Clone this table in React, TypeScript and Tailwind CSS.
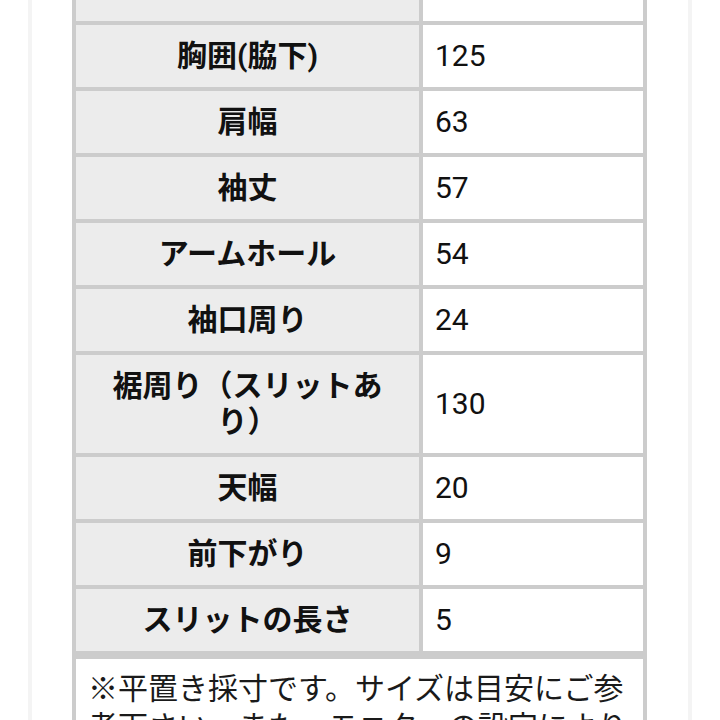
const rows: { label: string; value: string }[] = [
  { label: "胸囲(脇下)", value: "125" },
  { label: "肩幅", value: "63" },
  { label: "袖丈", value: "57" },
  { label: "アームホール", value: "54" },
  { label: "袖口周り", value: "24" },
  { label: "裾周り（スリットあり）", value: "130" },
  { label: "天幅", value: "20" },
  { label: "前下がり", value: "9" },
  { label: "スリットの長さ", value: "5" },
];

function SizeRow({ label, value }: { label: string; value: string }) {
  return (
    <div className="grid grid-cols-[343px_220px] gap-[4px]">
      <div className="flex min-h-[62px] items-center justify-center bg-[#ececec] px-[20px] py-[13px] text-center text-[30px] font-bold leading-[36px] text-[#111]">
        {label}
      </div>
      <div className="flex min-h-[62px] items-center bg-white px-[12px] py-[13px] text-[30px] leading-[36px] text-[#111]">
        {value}
      </div>
    </div>
  );
}

export default function App() {
  return (
    <div
      className="h-[720px] w-[720px] overflow-hidden bg-white"
      style={{ fontFamily: "Roboto, 'Noto Sans CJK JP', sans-serif" }}
    >
      <div className="ml-[28px] h-full w-[664px] border-x-4 border-[#f4f4f4] pl-[40px]">
        <div className="flex w-[575px] flex-col gap-[4px] bg-[#cccccc] px-[4px] pb-[4px]">
          <div className="grid grid-cols-[343px_220px] gap-[4px]">
            <div className="h-[21px] bg-[#ececec]" />
            <div className="h-[21px] bg-white" />
          </div>
          {rows.map((r) => (
            <SizeRow key={r.label} label={r.label} value={r.value} />
          ))}
        </div>
        <div className="w-[575px] border-4 border-[#cccccc] bg-white px-[12px] pt-[11px] pb-[20px] text-[30px] leading-[38px] text-[#1a1a1a]">
          ※平置き採寸です。サイズは目安にご参考下さい。また、モニターの設定により実際の色味と異なる場合がございます。
        </div>
      </div>
    </div>
  );
}
